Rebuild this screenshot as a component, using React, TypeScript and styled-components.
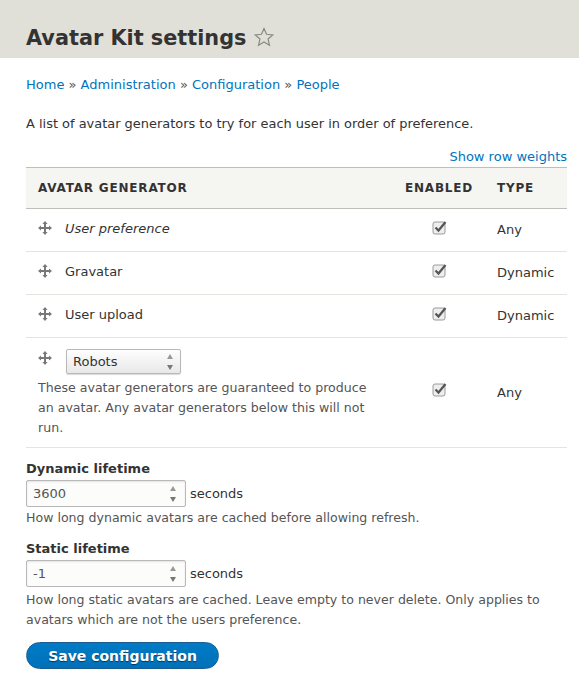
import React, { FC } from 'react';
import styled, { createGlobalStyle } from 'styled-components';

const GlobalStyle = createGlobalStyle`
  html, body {
    margin: 0;
    padding: 0;
    background: #fff;
  }
  body {
    font-family: "DejaVu Sans", sans-serif;
    font-size: 13px;
    line-height: 19px;
    color: #333;
  }
`;

const PageHeader = styled.header`
  display: flex;
  align-items: flex-end;
  height: 58px;
  box-sizing: border-box;
  padding: 0 26px 5px;
  background: #e0e0d8;
`;

const Title = styled.h1`
  margin: 0;
  font-size: 20.8px;
  line-height: 29px;
  font-weight: 700;
  color: #333;
`;

const StarIcon = styled.svg`
  width: 20px;
  height: 20px;
  margin: 0 0 6px 8px;
`;

const Main = styled.main`
  padding: 17px 12px 0 26px;
`;

const Crumbs = styled.nav`
  color: #555;
  height: 19px;
`;

const Link = styled.a`
  color: #0074bd;
  text-decoration: none;
`;

const Intro = styled.p`
  margin: 20px 0 0;
  font-size: 12.95px;
`;

const WeightToggle = styled.div`
  display: flex;
  justify-content: flex-end;
  margin-top: 14px;
  height: 20px;
`;

const Table = styled.table`
  width: 100%;
  border-collapse: collapse;
  table-layout: fixed;
`;

const HeadCell = styled.th<{ $center?: boolean; $w?: number }>`
  height: 41px;
  padding: 0 0 0 ${(p) => (p.$center ? 0 : 12)}px;
  background: #f5f5f2;
  border-top: 1px solid #bfbfba;
  border-bottom: 1px solid #bfbfba;
  font-size: 12px;
  letter-spacing: 0.8px;
  font-weight: 700;
  text-transform: uppercase;
  text-align: ${(p) => (p.$center ? 'center' : 'left')};
  width: ${(p) => (p.$w ? `${p.$w}px` : 'auto')};
  box-sizing: border-box;
`;

const Row = styled.tr`
  border-bottom: 1px solid #e6e4df;
`;

const Cell = styled.td<{ $raised?: boolean }>`
  height: 42px;
  box-sizing: content-box;
  padding: 0 0 0 12px;
  vertical-align: middle;
  & > span {
    position: relative;
    top: ${(p) => (p.$raised ? -1 : 0)}px;
  }
`;

const CheckCell = styled.td`
  padding: 0;
  text-align: center;
  vertical-align: middle;
`;

const Generator = styled.div`
  display: flex;
  align-items: center;
  gap: 13px;
  margin-top: -4px;
`;

const Name = styled.span<{ $italic?: boolean }>`
  font-style: ${(p) => (p.$italic ? 'italic' : 'normal')};
`;

const Stack = styled.div`
  padding: 0 0 9px;
`;

const SelectRow = styled.div`
  display: flex;
  align-items: flex-start;
  gap: 14px;
  padding-top: 11px;
  & > svg {
    margin-top: 2px;
  }
`;

const Note = styled.div`
  margin-top: 4px;
  font-size: 12.6px;
  color: #555;
  line-height: 20px;
  width: 345px;
`;

const FieldBox = styled.div<{ $w: number; $h: number; $select?: boolean }>`
  position: relative;
  display: flex;
  align-items: center;
  box-sizing: border-box;
  width: ${(p) => p.$w}px;
  height: ${(p) => p.$h}px;
  padding: 0 6px;
  border: 1px solid #b8b8b8;
  border-radius: 2px;
  background: ${(p) => (p.$select ? 'linear-gradient(#fefefe, #e8e8e8)' : '#fcfcfa')};
  box-shadow: ${(p) => (p.$select ? '0 1px 1px rgba(0,0,0,.15)' : 'inset 0 1px 2px rgba(0,0,0,.1)')};
  color: ${(p) => (p.$select ? '#333' : '#555')};
`;

const Arrows = styled.svg<{ $right: number }>`
  position: absolute;
  right: ${(p) => p.$right}px;
  top: 50%;
  width: 6px;
  height: 16px;
  transform: translateY(-50%);
`;

const Check = styled.svg`
  display: inline-block;
  width: 15px;
  height: 15px;
  vertical-align: middle;
  margin-top: -8px;
`;

const Field = styled.div`
  margin-top: 11px;
  &:first-of-type {
    margin-top: 12px;
  }
`;

const FieldLabel = styled.label`
  display: block;
  font-weight: 700;
  line-height: 20px;
`;

const InputLine = styled.div`
  display: flex;
  align-items: center;
  gap: 4px;
  margin-top: 1px;
`;

const Description = styled.div<{ $gap: number }>`
  margin-top: ${(p) => p.$gap}px;
  font-size: 12.57px;
  line-height: 20px;
  color: #555;
`;

const Save = styled.button`
  display: block;
  height: 27px;
  width: 193px;
  margin-top: 12px;
  padding: 0;
  border: 1px solid #1e5c90;
  border-radius: 14px;
  background: linear-gradient(#007bc6, #0071b8);
  color: #fff;
  font: 700 14px "DejaVu Sans", sans-serif;
  text-shadow: 0 1px 1px rgba(0, 0, 0, 0.5);
`;

const Move: FC = () => (
  <svg width="14" height="14" viewBox="0 0 14 14" fill="#787878">
    <path d="M7 0l2.6 3H8v3h3V4.4L14 7l-3 2.6V8H8v3h1.6L7 14l-2.6-3H6V8H3v1.6L0 7l3-2.6V6h3V3H4.4z" />
  </svg>
);

const CheckMark: FC = () => (
  <Check viewBox="0 0 15 15">
    <rect x="1" y="2" width="12" height="12" rx="2" fill="#eeeeee" stroke="#9a9a9a" />
    <path d="M3.5 7.5l3 3L13.5 2" fill="none" stroke="#555" strokeWidth="2.2" />
  </Check>
);

const Spinner: FC<{ right: number }> = ({ right }) => (
  <Arrows $right={right} viewBox="0 0 6 16">
    <path d="M3 0l3 5H0z" fill="#999" />
    <path d="M0 11h6l-3 5z" fill="#777" />
  </Arrows>
);

const rows = [
  { name: 'User preference', italic: true, type: 'Any' },
  { name: 'Gravatar', type: 'Dynamic' },
  { name: 'User upload', type: 'Dynamic' },
];

const App: FC = () => (
  <>
    <GlobalStyle />
    <PageHeader>
      <Title>Avatar Kit settings</Title>
      <StarIcon viewBox="0 0 20 20">
        <path
          d="M10 1.5l2.5 5.8 6.3.6-4.8 4.1 1.5 6.2L10 15l-5.5 3.2L6 12 1.2 7.9l6.3-.6z"
          fill="none"
          stroke="#8a8a80"
          strokeWidth="1.2"
        />
      </StarIcon>
    </PageHeader>
    <Main>
      <Crumbs>
        <Link href="#">Home</Link> » <Link href="#">Administration</Link> »{' '}
        <Link href="#">Configuration</Link> » <Link href="#">People</Link>
      </Crumbs>
      <Intro>A list of avatar generators to try for each user in order of preference.</Intro>
      <WeightToggle>
        <Link href="#">Show row weights</Link>
      </WeightToggle>
      <Table>
        <thead>
          <tr>
            <HeadCell>Avatar generator</HeadCell>
            <HeadCell $center $w={92}>Enabled</HeadCell>
            <HeadCell $w={82}>Type</HeadCell>
          </tr>
        </thead>
        <tbody>
          {rows.map((r) => (
            <Row key={r.name}>
              <Cell>
                <Generator>
                  <Move />
                  <Name $italic={r.italic}>{r.name}</Name>
                </Generator>
              </Cell>
              <CheckCell><CheckMark /></CheckCell>
              <Cell $raised><span>{r.type}</span></Cell>
            </Row>
          ))}
          <Row>
            <Cell>
              <Stack>
                <SelectRow>
                  <Move />
                  <FieldBox $w={115} $h={25} $select>
                    Robots
                    <Spinner right={7} />
                  </FieldBox>
                </SelectRow>
                <Note>
                  These avatar generators are guaranteed to produce an avatar. Any avatar generators below this will not run.
                </Note>
              </Stack>
            </Cell>
            <CheckCell><CheckMark /></CheckCell>
            <Cell><span>Any</span></Cell>
          </Row>
        </tbody>
      </Table>
      <Field>
        <FieldLabel>Dynamic lifetime</FieldLabel>
        <InputLine>
          <FieldBox $w={160} $h={27}>3600<Spinner right={9} /></FieldBox>
          seconds
        </InputLine>
        <Description $gap={1}>How long dynamic avatars are cached before allowing refresh.</Description>
      </Field>
      <Field>
        <FieldLabel>Static lifetime</FieldLabel>
        <InputLine>
          <FieldBox $w={160} $h={27}>-1<Spinner right={9} /></FieldBox>
          seconds
        </InputLine>
        <Description $gap={3}>
          How long static avatars are cached. Leave empty to never delete. Only applies to avatars which are not the users preference.
        </Description>
      </Field>
      <Save>Save configuration</Save>
    </Main>
  </>
);

export default App;
